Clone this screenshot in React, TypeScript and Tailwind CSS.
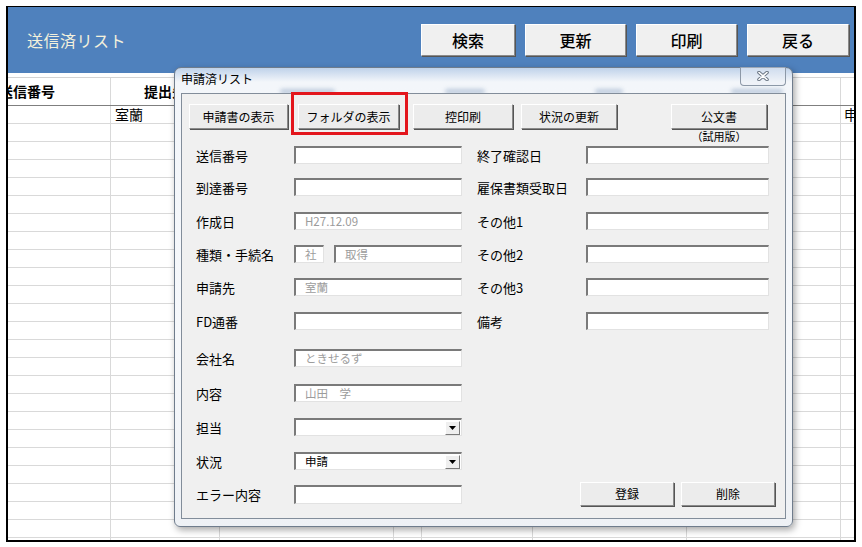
import React from 'react';

const COLS = ['w-[103px]', 'w-[109px]', 'w-[174px]', 'w-[28px]', 'w-[111px]', 'w-[154px]', 'w-[154px]', 'w-[40px]'];

const btn3d =
  'flex items-center justify-center bg-[#ececec] border border-t-white border-l-white border-r-[#8a8a8a] border-b-[#8a8a8a] shadow-[1px_1px_0_#555]';

interface Row {
  label: string;
  value?: string;
  dark?: boolean;
  combo?: boolean;
  split?: boolean;
  right?: string;
  mt: string;
}

const ROWS: Row[] = [
  { label: '送信番号', right: '終了確認日', mt: 'mt-[17px]' },
  { label: '到達番号', right: '雇保書類受取日', mt: 'mt-[14px]' },
  { label: '作成日', value: 'H27.12.09', right: 'その他1', mt: 'mt-[16px]' },
  { label: '種類・手続名', split: true, right: 'その他2', mt: 'mt-[15px]' },
  { label: '申請先', value: '室蘭', right: 'その他3', mt: 'mt-[15px]' },
  { label: 'FD通番', right: '備考', mt: 'mt-[16px]' },
  { label: '会社名', value: 'ときせるず', mt: 'mt-[19px]' },
  { label: '内容', value: '山田　学', mt: 'mt-[17px]' },
  { label: '担当', combo: true, mt: 'mt-[16px]' },
  { label: '状況', value: '申請', dark: true, combo: true, mt: 'mt-[16px]' },
];

function Box({ w, value, dark, combo, h = 'h-[18px]' }: { w: string; value?: string; dark?: boolean; combo?: boolean; h?: string }) {
  return (
    <div
      className={`${w} ${h} flex items-center bg-white border-t-2 border-l-2 border-r border-b border-t-[#7a7a7a] border-l-[#7a7a7a] border-r-[#e2e2e2] border-b-[#e2e2e2] text-[11.5px] leading-none ${dark ? 'text-black' : 'text-[#9c9c9c]'}`}
    >
      <span className="flex-1 pl-[9px] whitespace-nowrap">{value}</span>
      {combo && (
        <div className="w-[15px] h-[14px] mr-px flex items-center justify-center bg-[#efefef] border border-t-white border-l-white border-r-[#7a7a7a] border-b-[#7a7a7a]">
          <svg width="7" height="4" viewBox="0 0 7 4">
            <path d="M0 0H7L3.5 4Z" fill="#000" />
          </svg>
        </div>
      )}
    </div>
  );
}

function Label({ w, children }: { w: string; children: React.ReactNode }) {
  return <span className={`${w} text-[13px] leading-none text-black whitespace-nowrap`}>{children}</span>;
}

export default function App() {
  return (
    <div className="relative w-[862px] h-[547px] bg-white overflow-hidden font-['Noto_Sans_CJK_JP',sans-serif]">
      {/* sheet */}
      <div className="ml-[6px] mt-[6px] w-[850px] h-[536px] border-2 border-t border-black overflow-hidden flex flex-col">
        <div className="h-[66px] shrink-0 bg-[#4f81bd] flex items-center">
          <span className="pl-[19px] text-[16px] text-[#f4f1dc] tracking-[0.5px]">送信済リスト</span>
          <div className="ml-auto mr-[5px] flex gap-[10px] text-[16px] font-medium text-black">
            <div className={`${btn3d} w-[94px] h-[32px] bg-[#f0f0f0]`}>検索</div>
            <div className={`${btn3d} w-[101px] h-[32px] bg-[#f0f0f0]`}>更新</div>
            <div className={`${btn3d} w-[101px] h-[32px] bg-[#f0f0f0]`}>印刷</div>
            <div className={`${btn3d} w-[102px] h-[32px] bg-[#f0f0f0]`}>戻る</div>
          </div>
        </div>
        <div className="h-[5px] shrink-0 border-b border-[#d4d4d4]" />
        <div className="h-[28px] shrink-0 flex border-b border-[#7f7f7f] text-[14px] font-bold text-black">
          {COLS.map((c, i) => (
            <div key={i} className={`${c} shrink-0 h-full border-r border-[#d9d9d9] flex items-end pb-[3px] whitespace-nowrap`}>
              {i === 0 && <span className="-ml-[9px]">送信番号</span>}
              {i === 1 && <span className="w-full text-center">提出先</span>}
            </div>
          ))}
        </div>
        {Array.from({ length: 25 }).map((_, r) => (
          <div key={r} className="h-[18px] shrink-0 flex border-b border-[#d9d9d9] text-[14px] text-black">
            {COLS.map((c, i) => (
              <div key={i} className={`${c} shrink-0 h-full border-r border-[#d9d9d9] flex items-center whitespace-nowrap`}>
                {r === 0 && i === 1 && <span className="pl-[4px]">室蘭</span>}
                {r === 0 && i === 7 && <span className="pl-[3px]">申</span>}
              </div>
            ))}
          </div>
        ))}
      </div>

      {/* dialog */}
      <div className="absolute left-[174px] top-[67px] w-[619px] h-[460px] flex flex-col px-[6px] pb-[7px] rounded-t-[7px] rounded-b-[6px] border border-[#6f7c8c] bg-[linear-gradient(to_bottom,#bfd2ea_0px,#f3f6fa_14px,#f6f8fb_60%,#eef1f5_100%)] shadow-[2px_3px_7px_rgba(0,0,0,0.35)]">
        <span className="absolute left-[105px] top-[21px] w-[55px] h-[5px] rounded-full bg-[#a7b9d1] blur-[2px] opacity-70" />
        <span className="absolute left-[270px] top-[21px] w-[40px] h-[5px] rounded-full bg-[#a7b9d1] blur-[2px] opacity-70" />
        <span className="absolute left-[420px] top-[21px] w-[28px] h-[5px] rounded-full bg-[#a7b9d1] blur-[2px] opacity-70" />
        <span className="absolute left-[556px] top-[21px] w-[52px] h-[5px] rounded-full bg-[#a7b9d1] blur-[2px] opacity-70" />
        <div className="h-[25px] shrink-0 flex items-start justify-between">
          <span className="pt-[5px] text-[12px] leading-none text-black">申請済リスト</span>
          <div className="relative w-[46px] h-[19px] -mt-px flex items-center justify-center rounded-b-[4px] border border-t-0 border-[#8c98a7] bg-[#e9eef5]/40">
            <svg width="14" height="10" viewBox="0 0 14 10">
              <path d="M3 1.5L11 8.5M11 1.5L3 8.5" stroke="#6b7684" strokeWidth="3.6" strokeLinecap="round" />
              <path d="M3 1.5L11 8.5M11 1.5L3 8.5" stroke="#fff" strokeWidth="1.6" strokeLinecap="round" />
            </svg>
          </div>
        </div>

        <div className="relative flex-1 flex flex-col border border-[#828d9a] bg-[#f0f0f0]">
          <div className="mt-[10px] h-[25px] flex items-start text-[12px] text-black">
            <div className={`${btn3d} ml-[7px] w-[99px] h-[25px]`}>申請書の表示</div>
            <div className={`${btn3d} ml-[10px] w-[101px] h-[25px]`}>フォルダの表示</div>
            <div className={`${btn3d} ml-[14px] w-[100px] h-[25px]`}>控印刷</div>
            <div className={`${btn3d} ml-[8px] w-[96px] h-[25px]`}>状況の更新</div>
            <div className="ml-[54px] w-[96px] flex flex-col items-center">
              <div className={`${btn3d} w-[96px] h-[25px]`}>公文書</div>
              <span className="text-[11px] leading-[12px] mt-px">（試用版）</span>
            </div>
          </div>

          {ROWS.map((row) => (
            <div key={row.label} className={`${row.mt} h-[18px] flex items-center pl-[14px]`}>
              <Label w="w-[98px]">{row.label}</Label>
              {row.split ? (
                <div className="w-[168px] flex gap-[10px]">
                  <Box w="w-[30px]" value="社" />
                  <Box w="w-[128px]" value="取得" />
                </div>
              ) : (
                <Box w="w-[168px]" value={row.value} dark={row.dark} combo={row.combo} />
              )}
              {row.right && (
                <>
                  <span className="ml-[15px]" />
                  <Label w="w-[109px]">{row.right}</Label>
                  <Box w="w-[183px]" />
                </>
              )}
            </div>
          ))}

          <div className="mt-[12px] h-[24px] flex items-center pl-[14px] pr-[10px]">
            <Label w="w-[98px]">エラー内容</Label>
            <Box w="w-[168px]" h="h-[19px]" />
            <div className={`${btn3d} ml-auto w-[94px] h-[24px] text-[12px]`}>登録</div>
            <div className={`${btn3d} ml-[7px] w-[94px] h-[24px] text-[12px]`}>削除</div>
          </div>
        </div>
      </div>

      {/* annotation */}
      <div className="absolute left-[291px] top-[92px] w-[117px] h-[43px] border-[3px] border-[#e3161d]" />
    </div>
  );
}
